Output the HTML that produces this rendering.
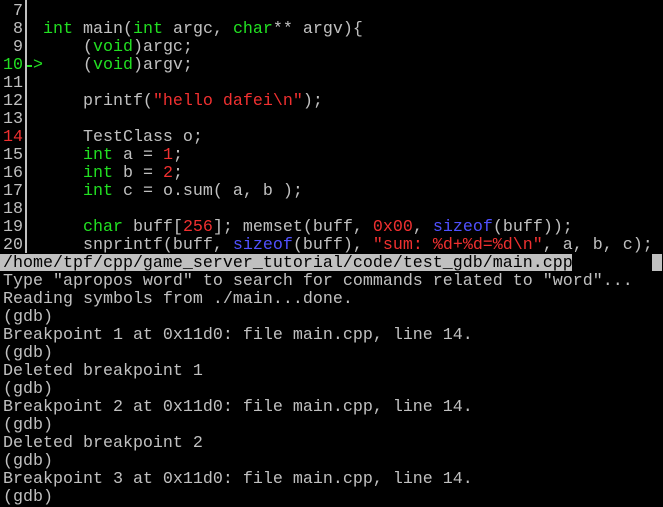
<!DOCTYPE html>
<html><head><meta charset="utf-8"><style>
html,body{margin:0;padding:0;background:#000;width:663px;height:505px;overflow:hidden}
#t{position:absolute;left:3px;top:3px;font-family:"Liberation Mono","Courier New",monospace;font-size:16.67px;color:#c0c0c0;}
.l{height:18px;line-height:18px;white-space:pre}
.g{color:#22e022}.r{color:#f03030}.b{color:#5050ff}.n{color:#c0c0c0}
.bar{position:absolute;left:25px;top:0;width:2px;height:253px;background:#c0c0c0}
.st{position:absolute;left:0;top:254px;width:572px;height:17px;background:#c0c0c0}
.cur{position:absolute;left:652px;top:254px;width:10px;height:17px;background:#c0c0c0}
.sl{color:#000}
</style></head><body>
<div class="st"></div><div class="cur"></div>
<div class="bar"></div>
<div style="position:absolute;left:27px;top:65px;width:5px;height:2px;background:#22e022"></div>
<div id="t">
<div class="l"> 7</div>
<div class="l"> 8  <span class="g">int</span> main(<span class="g">int</span> argc, <span class="g">char</span>** argv){</div>
<div class="l"> 9      (<span class="g">void</span>)argc;</div>
<div class="l"><span class="g">10 &gt;</span>    (<span class="g">void</span>)argv;</div>
<div class="l">11</div>
<div class="l">12      printf(<span class="r">"hello dafei\n"</span>);</div>
<div class="l">13</div>
<div class="l"><span class="r">14</span>      TestClass o;</div>
<div class="l">15      <span class="g">int</span> a = <span class="r">1</span>;</div>
<div class="l">16      <span class="g">int</span> b = <span class="r">2</span>;</div>
<div class="l">17      <span class="g">int</span> c = o.sum( a, b );</div>
<div class="l">18</div>
<div class="l">19      <span class="g">char</span> buff[<span class="r">256</span>]; memset(buff, <span class="r">0x00</span>, <span class="b">sizeof</span>(buff));</div>
<div class="l">20      snprintf(buff, <span class="b">sizeof</span>(buff), <span class="r">"sum: %d+%d=%d\n"</span>, a, b, c);</div>
<div class="l sl">/home/tpf/cpp/game_server_tutorial/code/test_gdb/main.cpp</div>
<div class="l">Type "apropos word" to search for commands related to "word"...</div>
<div class="l">Reading symbols from ./main...done.</div>
<div class="l">(gdb)</div>
<div class="l">Breakpoint 1 at 0x11d0: file main.cpp, line 14.</div>
<div class="l">(gdb)</div>
<div class="l">Deleted breakpoint 1</div>
<div class="l">(gdb)</div>
<div class="l">Breakpoint 2 at 0x11d0: file main.cpp, line 14.</div>
<div class="l">(gdb)</div>
<div class="l">Deleted breakpoint 2</div>
<div class="l">(gdb)</div>
<div class="l">Breakpoint 3 at 0x11d0: file main.cpp, line 14.</div>
<div class="l">(gdb)</div>
</div>
</body></html>
